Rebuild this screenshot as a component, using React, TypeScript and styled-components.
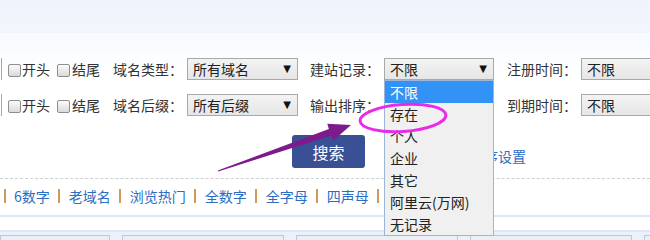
import React from "react";
import styled, { createGlobalStyle } from "styled-components";

const GlobalStyle = createGlobalStyle`
  html, body { margin: 0; padding: 0; background: #ffffff; }
  body {
    font-family: "Noto Sans CJK SC", "Microsoft YaHei", "DejaVu Sans", sans-serif;
    font-size: 14px;
    color: #333333;
  }
`;

const Page = styled.div`
  position: relative;
  width: 650px;
  height: 240px;
  overflow: hidden;
  background: #ffffff;
`;

const Header = styled.div`
  height: 34px;
  background: linear-gradient(#eff3fb, #f3f6fc);
  border-bottom: 1px solid #ffffff;
  box-shadow: 0 1px 0 #d0d9e6, 0 2px 0 #e3eaf3;
`;

const Form = styled.div`
  padding-top: 23px;
  background: linear-gradient(#f6faff, #ffffff 40px);
`;

const Row = styled.div<{ $mt?: number }>`
  display: flex;
  align-items: center;
  width: max-content;
  height: 22px;
  margin-top: ${(p) => p.$mt ?? 0}px;
`;

const Stub = styled.div`
  flex: none;
  width: 1px;
  height: 22px;
  border-right: 1px solid #a9a9a9;
`;

const Check = styled.span<{ $ml: number }>`
  flex: none;
  display: inline-block;
  box-sizing: border-box;
  width: 13px;
  height: 13px;
  margin-left: ${(p) => p.$ml}px;
  margin-top: 3px;
  border: 1px solid #8e8e8e;
  border-radius: 2px;
  background: linear-gradient(#fbfbfb, #dadada);
`;

const CheckText = styled.span<{ $ml: number }>`
  flex: none;
  margin-left: ${(p) => p.$ml}px;
  line-height: 22px;
  white-space: nowrap;
`;

const Label = styled.span<{ $ml: number }>`
  flex: none;
  display: inline-block;
  width: 70px;
  margin-left: ${(p) => p.$ml}px;
  margin-right: 4px;
  line-height: 22px;
  white-space: nowrap;
`;

const SelectWrap = styled.div`
  flex: none;
  position: relative;
`;

const SelectBox = styled.div<{ $w: number }>`
  flex: none;
  box-sizing: border-box;
  width: ${(p) => p.$w}px;
  height: 22px;
  border: 1px solid #a9a9a9;
  background: linear-gradient(#f3f3f3, #e6e6e6);
  display: flex;
  align-items: center;
  justify-content: space-between;
  padding: 0 6px 0 5px;
  line-height: 20px;
  color: #222222;
  white-space: nowrap;
`;

const Arrow = styled.span`
  font-size: 10px;
  color: #111111;
  font-family: "DejaVu Sans", sans-serif;
`;

const DropList = styled.ul`
  position: absolute;
  top: 22px;
  left: 0;
  z-index: 5;
  box-sizing: border-box;
  width: 110px;
  margin: 0;
  padding: 0;
  list-style: none;
  border: 1px solid #9db5d6;
  background: #f0f0f0;
`;

const Option = styled.li<{ $active?: boolean }>`
  height: 22px;
  line-height: 22px;
  padding-left: 5px;
  color: ${(p) => (p.$active ? "#ffffff" : "#222222")};
  background: ${(p) => (p.$active ? "#3392f5" : "transparent")};
  white-space: nowrap;
`;

const SearchRow = styled.div`
  display: flex;
  align-items: flex-end;
  margin-top: 19px;
  padding-left: 292px;
  height: 33px;
`;

const SearchButton = styled.button`
  width: 73px;
  height: 33px;
  border: none;
  border-radius: 3px;
  background: #3a5095;
  color: #ffffff;
  font-family: inherit;
  font-size: 16px;
  padding: 0;
`;

const SetLink = styled.a`
  margin-left: 105px;
  margin-bottom: 2px;
  color: #2b6cc4;
  text-decoration: none;
  line-height: 20px;
  white-space: nowrap;
`;

const Dashed = styled.div`
  margin-top: 10px;
  border-top: 1px dashed #cfcfcf;
`;

const Links = styled.div`
  display: flex;
  align-items: center;
  height: 20px;
  margin-top: 7px;
  white-space: nowrap;
`;

const Sep = styled.span`
  display: inline-block;
  width: 2px;
  height: 14px;
  background: #d39a5c;
  margin: 0 9px 0 8px;
  &:first-child { margin-left: 4px; margin-right: 8px; }
`;

const LinkItem = styled.a`
  color: #2b6cc4;
  text-decoration: none;
  line-height: 20px;
`;

const BlueLine = styled.div`
  margin-top: 9px;
  height: 2px;
  background: #dce8f7;
`;

const Bottom = styled.div`
  margin-top: 13px;
  border-top: 2px solid #dce8f7;
  background: #eaf1fa;
  padding-top: 3px;
  display: flex;
  gap: 12px;
  height: 20px;
`;

const Tab = styled.div<{ $w: number }>`
  flex: 0 0 ${(p) => p.$w}px;
  border: 1px solid #b9c8dc;
  border-bottom: none;
  background: linear-gradient(#e9eef5, #f4f7fb);
`;

const Overlay = styled.svg`
  position: absolute;
  left: 0;
  top: 0;
  pointer-events: none;
  z-index: 10;
`;

const options = ["不限", "存在", "个人", "企业", "其它", "阿里云(万网)", "无记录"];
const links = ["6数字", "老域名", "浏览热门", "全数字", "全字母", "四声母"];

export default function App() {
  return (
    <Page>
      <GlobalStyle />
      <Header />
      <Form>
        <Row>
          <Stub />
          <Check $ml={6} />
          <CheckText $ml={1}>开头</CheckText>
          <Check $ml={7} />
          <CheckText $ml={2}>结尾</CheckText>
          <Label $ml={13}>域名类型：</Label>
          <SelectBox $w={111}>
            <span>所有域名</span>
            <Arrow>▼</Arrow>
          </SelectBox>
          <Label $ml={12}>建站记录：</Label>
          <SelectWrap>
            <SelectBox $w={110}>
              <span>不限</span>
              <Arrow>▼</Arrow>
            </SelectBox>
            <DropList>
              {options.map((o, i) => (
                <Option key={o} $active={i === 0}>
                  {o}
                </Option>
              ))}
            </DropList>
          </SelectWrap>
          <Label $ml={13}>注册时间：</Label>
          <SelectBox $w={110}>
            <span>不限</span>
            <Arrow>▼</Arrow>
          </SelectBox>
        </Row>
        <Row $mt={14}>
          <Stub />
          <Check $ml={6} />
          <CheckText $ml={1}>开头</CheckText>
          <Check $ml={7} />
          <CheckText $ml={2}>结尾</CheckText>
          <Label $ml={13}>域名后缀：</Label>
          <SelectBox $w={111}>
            <span>所有后缀</span>
            <Arrow>▼</Arrow>
          </SelectBox>
          <Label $ml={12}>输出排序：</Label>
          <SelectBox $w={110}>
            <span />
            <Arrow>▼</Arrow>
          </SelectBox>
          <Label $ml={13}>到期时间：</Label>
          <SelectBox $w={110}>
            <span>不限</span>
            <Arrow>▼</Arrow>
          </SelectBox>
        </Row>
        <SearchRow>
          <SearchButton>搜索</SearchButton>
          <SetLink>排序设置</SetLink>
        </SearchRow>
        <Dashed />
        <Links>
          {links.map((l) => (
            <React.Fragment key={l}>
              <Sep />
              <LinkItem>{l}</LinkItem>
            </React.Fragment>
          ))}
          <Sep />
        </Links>
        <BlueLine />
        <Bottom>
          <Tab $w={108} />
          <Tab $w={160} />
          <Tab $w={160} />
          <Tab $w={160} />
          <Tab $w={100} />
        </Bottom>
      </Form>
      <Overlay width="650" height="240" viewBox="0 0 650 240">
        <ellipse
          cx="403"
          cy="118"
          rx="43"
          ry="13.5"
          fill="none"
          stroke="#e92ae9"
          strokeWidth="3"
          transform="rotate(-4 403 118)"
        />
        <polygon
          points="217.8,170.5 328.9,128.9 327.3,123.7 351,125 333.1,140.7 331.5,135.5 218.2,171.5"
          fill="#7d1a8c"
        />
      </Overlay>
    </Page>
  );
}
